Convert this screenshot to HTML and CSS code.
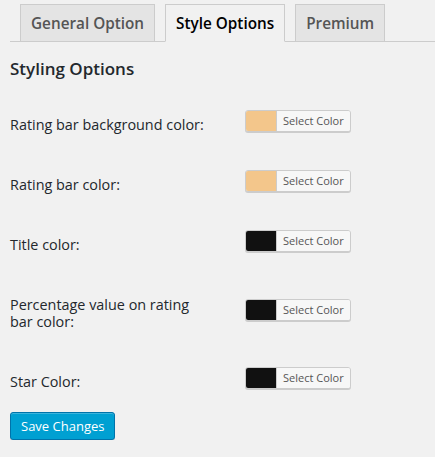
FILE: index.html
```html
<!DOCTYPE html>
<html>
<head>
<meta charset="utf-8">
<link rel="stylesheet" href="styles.css">
</head>
<body>
<div class="wrap">
  <nav class="tabs">
    <a class="tab">General Option</a>
    <a class="tab active">Style Options</a>
    <a class="tab">Premium</a>
  </nav>
  <h3 class="heading">Styling Options</h3>
  <div class="form">
    <div class="row">
      <div class="label">Rating bar background color:</div>
      <div class="control"><button class="color-btn"><span class="swatch peach"></span><span class="color-text">Select Color</span></button></div>
    </div>
    <div class="row">
      <div class="label">Rating bar color:</div>
      <div class="control"><button class="color-btn"><span class="swatch peach"></span><span class="color-text">Select Color</span></button></div>
    </div>
    <div class="row">
      <div class="label">Title color:</div>
      <div class="control"><button class="color-btn"><span class="swatch dark"></span><span class="color-text">Select Color</span></button></div>
    </div>
    <div class="row">
      <div class="label">Percentage value on rating bar color:</div>
      <div class="control"><button class="color-btn"><span class="swatch dark"></span><span class="color-text">Select Color</span></button></div>
    </div>
    <div class="row">
      <div class="label">Star Color:</div>
      <div class="control"><button class="color-btn"><span class="swatch dark"></span><span class="color-text">Select Color</span></button></div>
    </div>
  </div>
  <button class="save">Save Changes</button>
</div>
</body>
</html>
```
FILE: styles.css
```css
html, body {
  margin: 0;
  padding: 0;
  background: #f1f1f1;
  font-family: "Open Sans", "Liberation Sans", sans-serif;
  color: #23282d;
}

.wrap {
  padding-left: 10px;
}

.tabs {
  display: flex;
  align-items: flex-end;
  gap: 10px;
  padding: 4px 0 0 10px;
  border-bottom: 1px solid #ccc;
}

.tab {
  display: block;
  margin-bottom: -1px;
  padding: 6px 10px;
  line-height: 24px;
  font-size: 15.3px;
  font-weight: 600;
  color: #555;
  background: #e4e4e4;
  border: 1px solid #ccc;
  white-space: nowrap;
}

.tab.active {
  background: #f1f1f1;
  color: #000;
  border-bottom-color: #f1f1f1;
}

.heading {
  margin: 16px 0 0;
  font-size: 17px;
  line-height: 22px;
  font-weight: 600;
  color: #23282d;
}

.form {
  margin-top: 15px;
}

.row {
  display: flex;
}

.label {
  width: 200px;
  padding: 21px 35px 22px 0;
  font-size: 14.4px;
  line-height: 17px;
  color: #23282d;
}

.control {
  display: flex;
  align-items: center;
  padding-bottom: 8px;
}

.color-btn {
  display: flex;
  padding: 0;
  margin: 0;
  height: 22px;
  border: 1px solid #ccc;
  border-radius: 3px;
  box-shadow: 0 1px 0 #ccc;
  background: #f7f7f7;
  overflow: hidden;
  font-family: inherit;
}

.swatch {
  width: 30px;
  height: 20px;
}

.swatch.peach {
  background: #f3c68b;
}

.swatch.dark {
  background: #111;
}

.color-text {
  display: block;
  padding: 0 6px;
  border-left: 1px solid #ccc;
  font-size: 11px;
  line-height: 20px;
  color: #555;
  background: #f7f7f7;
}

.save {
  display: block;
  margin: 0;
  height: 28px;
  padding: 0 10px 1px;
  font-family: inherit;
  font-size: 13px;
  line-height: 26px;
  color: #fff;
  background: #00a0d2;
  border: 1px solid #0073aa;
  border-radius: 3px;
  box-shadow: inset 0 1px 0 rgba(120, 200, 230, 0.5), 0 1px 0 rgba(0, 0, 0, 0.15);
}
```
